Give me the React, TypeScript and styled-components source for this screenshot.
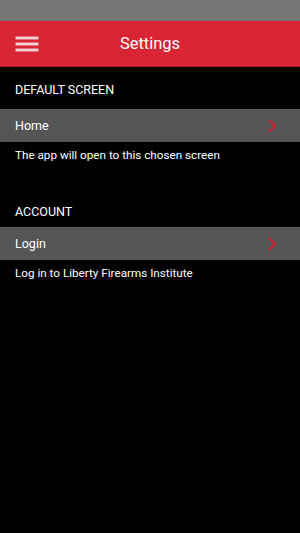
import styled, {createGlobalStyle} from "styled-components";

const GlobalStyle = createGlobalStyle`
    html, body {
        margin: 0;
        padding: 0;
        background: #000;
    }
    body {
        font-family: Roboto, "Liberation Sans", sans-serif;
        -webkit-font-smoothing: antialiased;
    }
`

const sections = [
    {title: 'DEFAULT SCREEN', item: 'Home', note: 'The app will open to this chosen screen', space: 9},
    {title: 'ACCOUNT', item: 'Login', note: 'Log in to Liberty Firearms Institute', space: 5},
]

const Chevron = () => (
    <svg width="10" height="16" viewBox="0 0 10 16">
        <path d="M2 2 L8 8 L2 14" fill="none" stroke="#cc2231" strokeWidth="2.2" strokeLinecap="butt"/>
    </svg>
)

export default function App() {
    return (
        <Screen>
            <GlobalStyle/>
            <StatusBar/>
            <Header>
                <MenuButton aria-label="menu">
                    <span/><span/><span/>
                </MenuButton>
                <Title>Settings</Title>
            </Header>
            <Content>
                {sections.map((s) => (
                    <Section key={s.title}>
                        <SectionTitle $space={s.space}>{s.title}</SectionTitle>
                        <Row>
                            <RowLabel>{s.item}</RowLabel>
                            <Chevron/>
                        </Row>
                        <Note>{s.note}</Note>
                    </Section>
                ))}
            </Content>
        </Screen>
    )
}

const Screen = styled.div`
    width: 300px;
    min-height: 533px;
    background: #000;
    color: #fff;
    display: flex;
    flex-direction: column;
`

const StatusBar = styled.div`
    height: 21px;
    background: #757575;
`

const Header = styled.div`
    height: 45px;
    background: #d82433;
    border-bottom: 1px solid #b81d2a;
    display: flex;
    align-items: center;
    position: relative;
`

const MenuButton = styled.div`
    width: 22px;
    margin-left: 16px;
    margin-top: 1px;
    display: flex;
    flex-direction: column;
    gap: 4px;

    span {
        display: block;
        height: 2px;
        background: #fbd3d6;
        box-shadow: 0 0 0 0.6px #f0a4ab;
    }
`

const Title = styled.div`
    position: absolute;
    left: 0;
    right: 0;
    top: 13px;
    text-align: center;
    font-size: 16.5px;
    line-height: 20px;
    color: #fff;
    pointer-events: none;
`

const Content = styled.div`
    padding-top: 13px;
    display: flex;
    flex-direction: column;
    gap: 39px;
`

const Section = styled.div`
    display: flex;
    flex-direction: column;
`

const SectionTitle = styled.div<{ $space: number }>`
    font-size: 12.5px;
    padding: 0 15px;
    height: 20px;
    line-height: 20px;
    margin-bottom: ${p => p.$space}px;
`

const Row = styled.div`
    height: 33px;
    background: #555;
    display: flex;
    align-items: center;
    justify-content: space-between;
    padding: 0 23px 0 15px;
`

const RowLabel = styled.div`
    font-size: 12.5px;
`

const Note = styled.div`
    font-size: 11.7px;
    padding: 5px 15px 0;
    line-height: 16px;
`
